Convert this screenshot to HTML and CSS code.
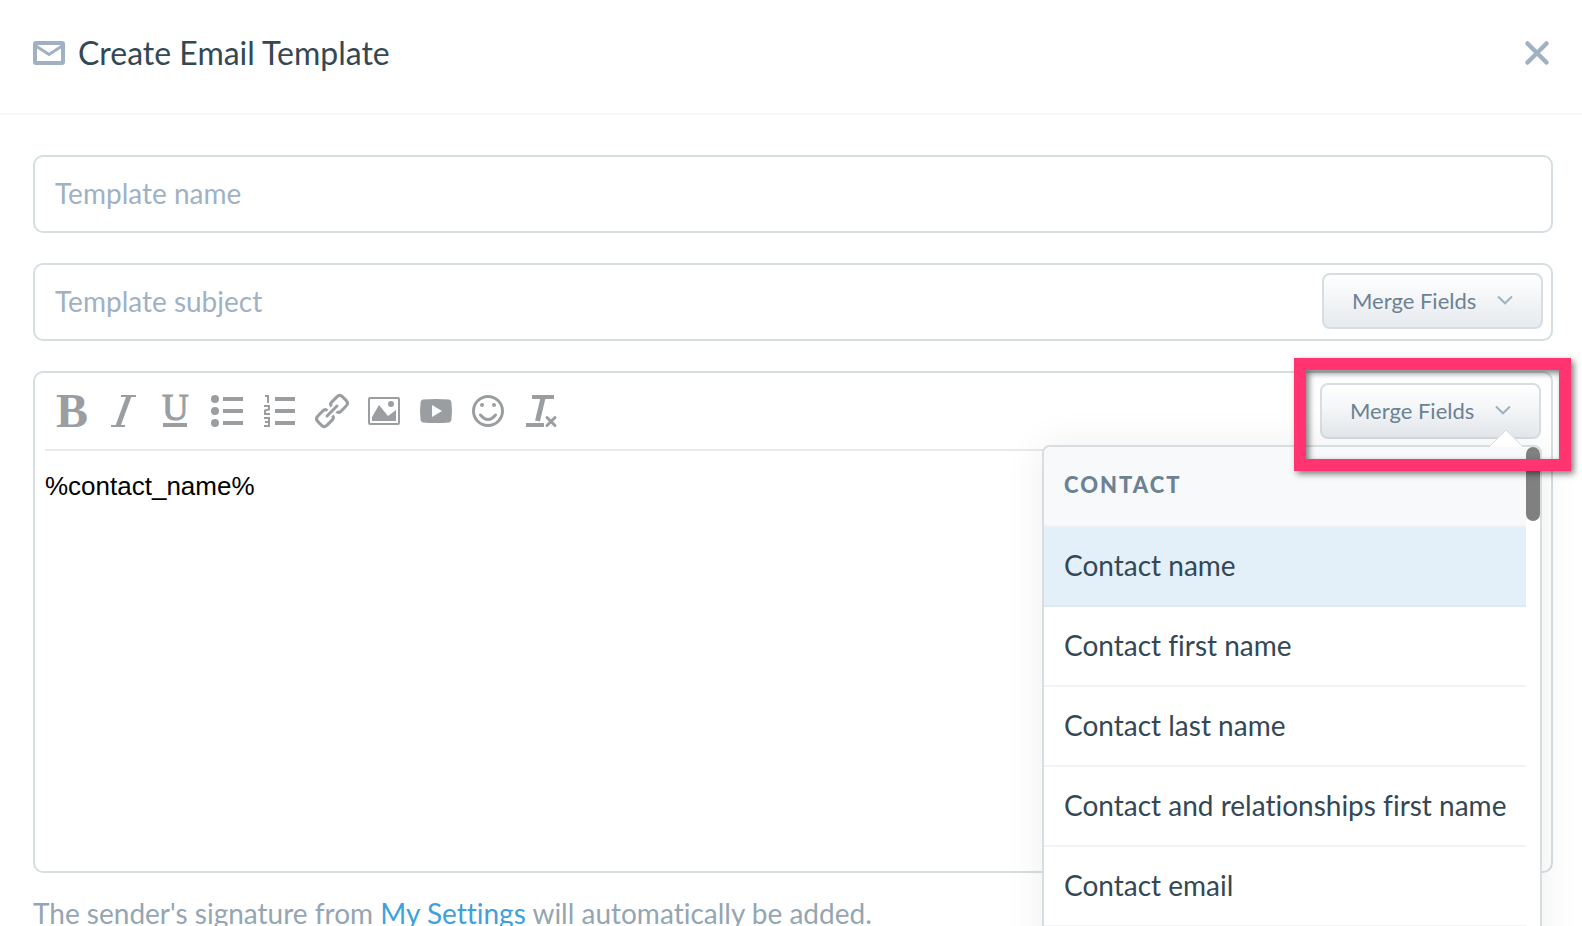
FILE: index.html
```html
<!DOCTYPE html>
<html lang="en">
<head>
    <meta charset="UTF-8" />
    <title>Create Email Template</title>
    <link rel="stylesheet" href="styles.css">
</head>
<body>
    <header class="header">
        <svg class="mail-icon" viewBox="0 0 32 24" aria-hidden="true">
            <rect x="2" y="2" width="28" height="20" rx="1" fill="none" stroke="#9fb1c3" stroke-width="4" stroke-linejoin="round" />
            <path d="M3 5 L16 13.5 L29 5" fill="none" stroke="#9fb1c3" stroke-width="3" />
        </svg>
        <h1>Create Email Template</h1>
        <button type="button" class="close" aria-label="Close">
            <svg viewBox="0 0 24 24"><path d="M2.5 2.5 L21.5 21.5 M21.5 2.5 L2.5 21.5" stroke="#9fb1c3" stroke-width="4.5" stroke-linecap="round" /></svg>
        </button>
    </header>

    <main class="content">
        <div class="field">
            <input type="text" placeholder="Template name" aria-label="Template name" />
        </div>

        <div class="field">
            <input type="text" placeholder="Template subject" aria-label="Template subject" />
            <button type="button" class="merge-btn">
                Merge Fields
                <svg viewBox="0 0 16 10"><path d="M1 1.5 L8 8.3 L15 1.5" /></svg>
            </button>
        </div>

        <div class="editor">
            <div class="toolbar">
                <div class="tools">
                    <button type="button" aria-label="Bold">
                        <svg viewBox="0 0 32 32"><text class="serif" x="0" y="32" font-size="48" font-weight="bold" stroke="none">B</text></svg>
                    </button>
                    <button type="button" aria-label="Italic">
                        <svg viewBox="0 0 32 32">
                            <path d="M13 0h15v2h-15z M3 30h14v2h-14z" />
                            <path class="line" d="M21 1L10 31" stroke-width="5" />
                        </svg>
                    </button>
                    <button type="button" aria-label="Underline">
                        <svg viewBox="0 0 32 32">
                            <text class="serif" x="2" y="25" font-size="37" stroke="#9a9ea1">U</text>
                            <rect x="3" y="28" width="24" height="4" />
                        </svg>
                    </button>
                    <button type="button" aria-label="Bulleted list">
                        <svg viewBox="0 0 32 32">
                            <circle cx="3" cy="4" r="4" />
                            <circle cx="3" cy="16" r="4" />
                            <circle cx="3" cy="28" r="4" />
                            <path d="M11 2h20v4h-20z M11 14h20v4h-20z M11 26h20v4h-20z" />
                        </svg>
                    </button>
                    <button type="button" aria-label="Numbered list">
                        <svg viewBox="0 0 32 32">
                            <g class="line" stroke-width="2">
                                <path d="M1 1h3v7" />
                                <path d="M0 11h5v3.5l-4 1v3.5h5" />
                                <path d="M0 23h5v8h-5 M1 27h4" />
                            </g>
                            <path d="M11 2h20v4h-20z M11 14h20v4h-20z M11 26h20v4h-20z" />
                        </svg>
                    </button>
                    <button type="button" aria-label="Link">
                        <svg viewBox="0 0 32 32">
                            <g class="line" stroke-width="3" transform="rotate(-45 16 16)">
                                <path d="M13 19.5v0q0 3-3 3H2.500q-4 0-4-4v-5q0-4 4-4H10q3 0 3 3" />
                                <path d="M19 12.500v0q0-3 3-3h7.500q4 0 4 4v5q0 4-4 4H22q-3 0-3-3" />
                                <path d="M9 16h14" stroke-linecap="round" />
                            </g>
                        </svg>
                    </button>
                    <button type="button" aria-label="Image">
                        <svg viewBox="0 0 32 32">
                            <rect class="line" x="1" y="3" width="30" height="26" rx="1" stroke-width="2" />
                            <path d="M4 26v-4l7-12 9 11 8-6v11z" />
                            <circle cx="23" cy="9" r="3" />
                        </svg>
                    </button>
                    <button type="button" aria-label="Video">
                        <svg viewBox="0 0 32 32">
                            <path fill-rule="evenodd" d="M3 4.600Q16 3.400 29 4.600 31 4.800 31.400 7 32.600 16 31.400 25 31 27.200 29 27.400 16 28.600 3 27.400 1 27.200 .6 25-.6 16 .6 7 1 4.800 3 4.600z M12 10v12l10-6z" />
                        </svg>
                    </button>
                    <button type="button" aria-label="Emoji">
                        <svg viewBox="0 0 32 32">
                            <circle class="line" cx="16" cy="16" r="14.500" stroke-width="3" />
                            <circle cx="10" cy="10" r="2" />
                            <circle cx="22" cy="10" r="2" />
                            <path class="line" d="M8.500 20q7.500 9 15 0" stroke-width="3" stroke-linecap="round" />
                        </svg>
                    </button>
                    <button type="button" aria-label="Clear formatting">
                        <svg viewBox="0 0 32 32">
                            <path d="M8 0h22v4h-22z M2 28h18v4h-18z" />
                            <path class="line" d="M19 3L13.500 26" stroke-width="5" />
                            <path class="line" d="M23 22.500l8 8 M31 22.500l-8 8" stroke-width="3" stroke-linecap="round" />
                        </svg>
                    </button>
                </div>

                <div class="merge-wrap">
                    <button type="button" class="merge-btn" aria-expanded="true">
                        Merge Fields
                        <svg viewBox="0 0 16 10"><path d="M1 1.500 L8 8.300 L15 1.500" /></svg>
                    </button>

                    <div class="dropdown">
                        <svg class="arrow" viewBox="0 0 34 18"><path d="M0 18 L17 1 L34 18" fill="#fff" stroke="#d6dee2" /></svg>
                        <div class="thumb"></div>
                        <h2>CONTACT</h2>
                        <ul>
                            <li><button type="button" class="active">Contact name</button></li>
                            <li><button type="button">Contact first name</button></li>
                            <li><button type="button">Contact last name</button></li>
                            <li><button type="button">Contact and relationships first name</button></li>
                            <li><button type="button">Contact email</button></li>
                        </ul>
                    </div>
                    <div class="highlight"></div>
                </div>
            </div>
            <textarea aria-label="Message">%contact_name%</textarea>
        </div>

        <p class="note">The sender's signature from <a href="#">My Settings</a> will automatically be added.</p>
    </main>
</body>
</html>
```
FILE: styles.css
```css
* {
    box-sizing: border-box;
}
body {
    margin: 0;
    height: 100vh;
    overflow: hidden;
    background: #fff;
    font-family: Lato, "Open Sans", sans-serif;
    font-size: 28px;
    font-variant-ligatures: none;
    color: #344854;
}
button, input, textarea {
    font: inherit;
    font-variant-ligatures: none;
    color: inherit;
    background: none;
    border: none;
    padding: 0;
    margin: 0;
    outline: none;
}
button {
    cursor: pointer;
}
svg {
    display: block;
    overflow: visible;
}

/* Header */
.header {
    display: flex;
    align-items: center;
    gap: 13px;
    height: 115px;
    padding: 0 33px 8px;
    border-bottom: 2px solid #f7f8f9;
}
.header h1 {
    flex: 1;
    margin: 0;
    font-size: 32px;
    font-weight: normal;
}
.mail-icon {
    width: 32px;
    height: 24px;
}
.close svg {
    width: 24px;
    height: 24px;
}

/* Form */
.content {
    display: flex;
    flex-direction: column;
    gap: 30px;
    padding: 40px 29px 0 33px;
}
.field {
    display: flex;
    align-items: center;
    height: 78px;
    padding: 0 8px 2px 20px;
    border: 2px solid #d6dee2;
    border-radius: 10px;
}
.field input {
    flex: 1;
    height: 100%;
}
.field input::placeholder {
    color: #9fb1c3;
    opacity: 1;
}
.merge-btn {
    display: flex;
    align-items: center;
    justify-content: space-between;
    width: 221px;
    height: 56px;
    padding: 0 28px 2px;
    border: 2px solid #d6dee2;
    border-radius: 8px;
    background: linear-gradient(#fff, #e6eaee);
    font-size: 22px;
    color: #6c8292;
}
.merge-btn svg {
    width: 16px;
    height: 10px;
    fill: none;
    stroke: #9fb1c3;
    stroke-width: 2;
}

/* Editor */
.editor {
    border: 2px solid #d6dee2;
    border-radius: 10px;
    padding: 0 10px;
}
.toolbar {
    display: flex;
    align-items: center;
    justify-content: space-between;
    padding: 10px 0;
    border-bottom: 2px solid #e6eaee;
}
.tools {
    display: flex;
    gap: 20px;
    padding-left: 11px;
}
.tools svg {
    width: 32px;
    height: 32px;
    fill: #9a9ea1;
}
.tools .line {
    fill: none;
    stroke: #9a9ea1;
}
.serif {
    font-family: "Liberation Serif", serif;
}
.editor textarea {
    display: block;
    width: 100%;
    height: 420px;
    padding-top: 19px;
    resize: none;
    font-family: "Liberation Sans", Arial, sans-serif;
    font-size: 26px;
    line-height: 32px;
    color: #000;
}
.note {
    margin: -6px 0 0;
    line-height: 32px;
    color: #94a5b3;
}
.note a {
    color: #3fa1dc;
    text-decoration: none;
}

/* Merge fields menu */
.merge-wrap {
    position: relative;
}
.dropdown {
    position: absolute;
    top: 62px;
    right: -1px;
    width: 500px;
    height: 560px;
    padding-right: 14px;
    border: 2px solid #d6dee2;
    border-radius: 8px;
    background: #fff;
    box-shadow: 0 0 40px rgba(0, 0, 0, 0.07);
    z-index: 1;
}
.dropdown .arrow {
    position: absolute;
    top: -18px;
    right: 17px;
    width: 34px;
    height: 18px;
}
.dropdown .thumb {
    position: absolute;
    top: 0;
    right: 0;
    width: 14px;
    height: 74px;
    border-radius: 7px;
    background: #808080;
}
.dropdown h2 {
    height: 80px;
    margin: 0;
    padding: 0 20px;
    border-bottom: 2px solid #f1f3f7;
    border-top-left-radius: 6px;
    background: #f7f9fb;
    font-size: 22px;
    font-weight: 900;
    line-height: 76px;
    letter-spacing: 2px;
    color: #6c8292;
}
.dropdown ul {
    margin: 0;
    padding: 0;
    list-style: none;
}
.dropdown li button {
    display: block;
    width: 100%;
    height: 80px;
    padding: 0 20px 2px;
    border-bottom: 2px solid #f1f3f7;
    text-align: left;
    white-space: nowrap;
}
.dropdown li .active {
    background: #e3f0fa;
    border-bottom-color: #e2e8ef;
}

/* Pink callout frame around the open button */
.highlight {
    position: absolute;
    top: -25px;
    right: -30px;
    bottom: -32px;
    left: -26px;
    border: 12px solid #ff3470;
    filter: drop-shadow(3px 3px 3px rgba(0, 0, 0, 0.5));
    pointer-events: none;
    z-index: 2;
}
```
